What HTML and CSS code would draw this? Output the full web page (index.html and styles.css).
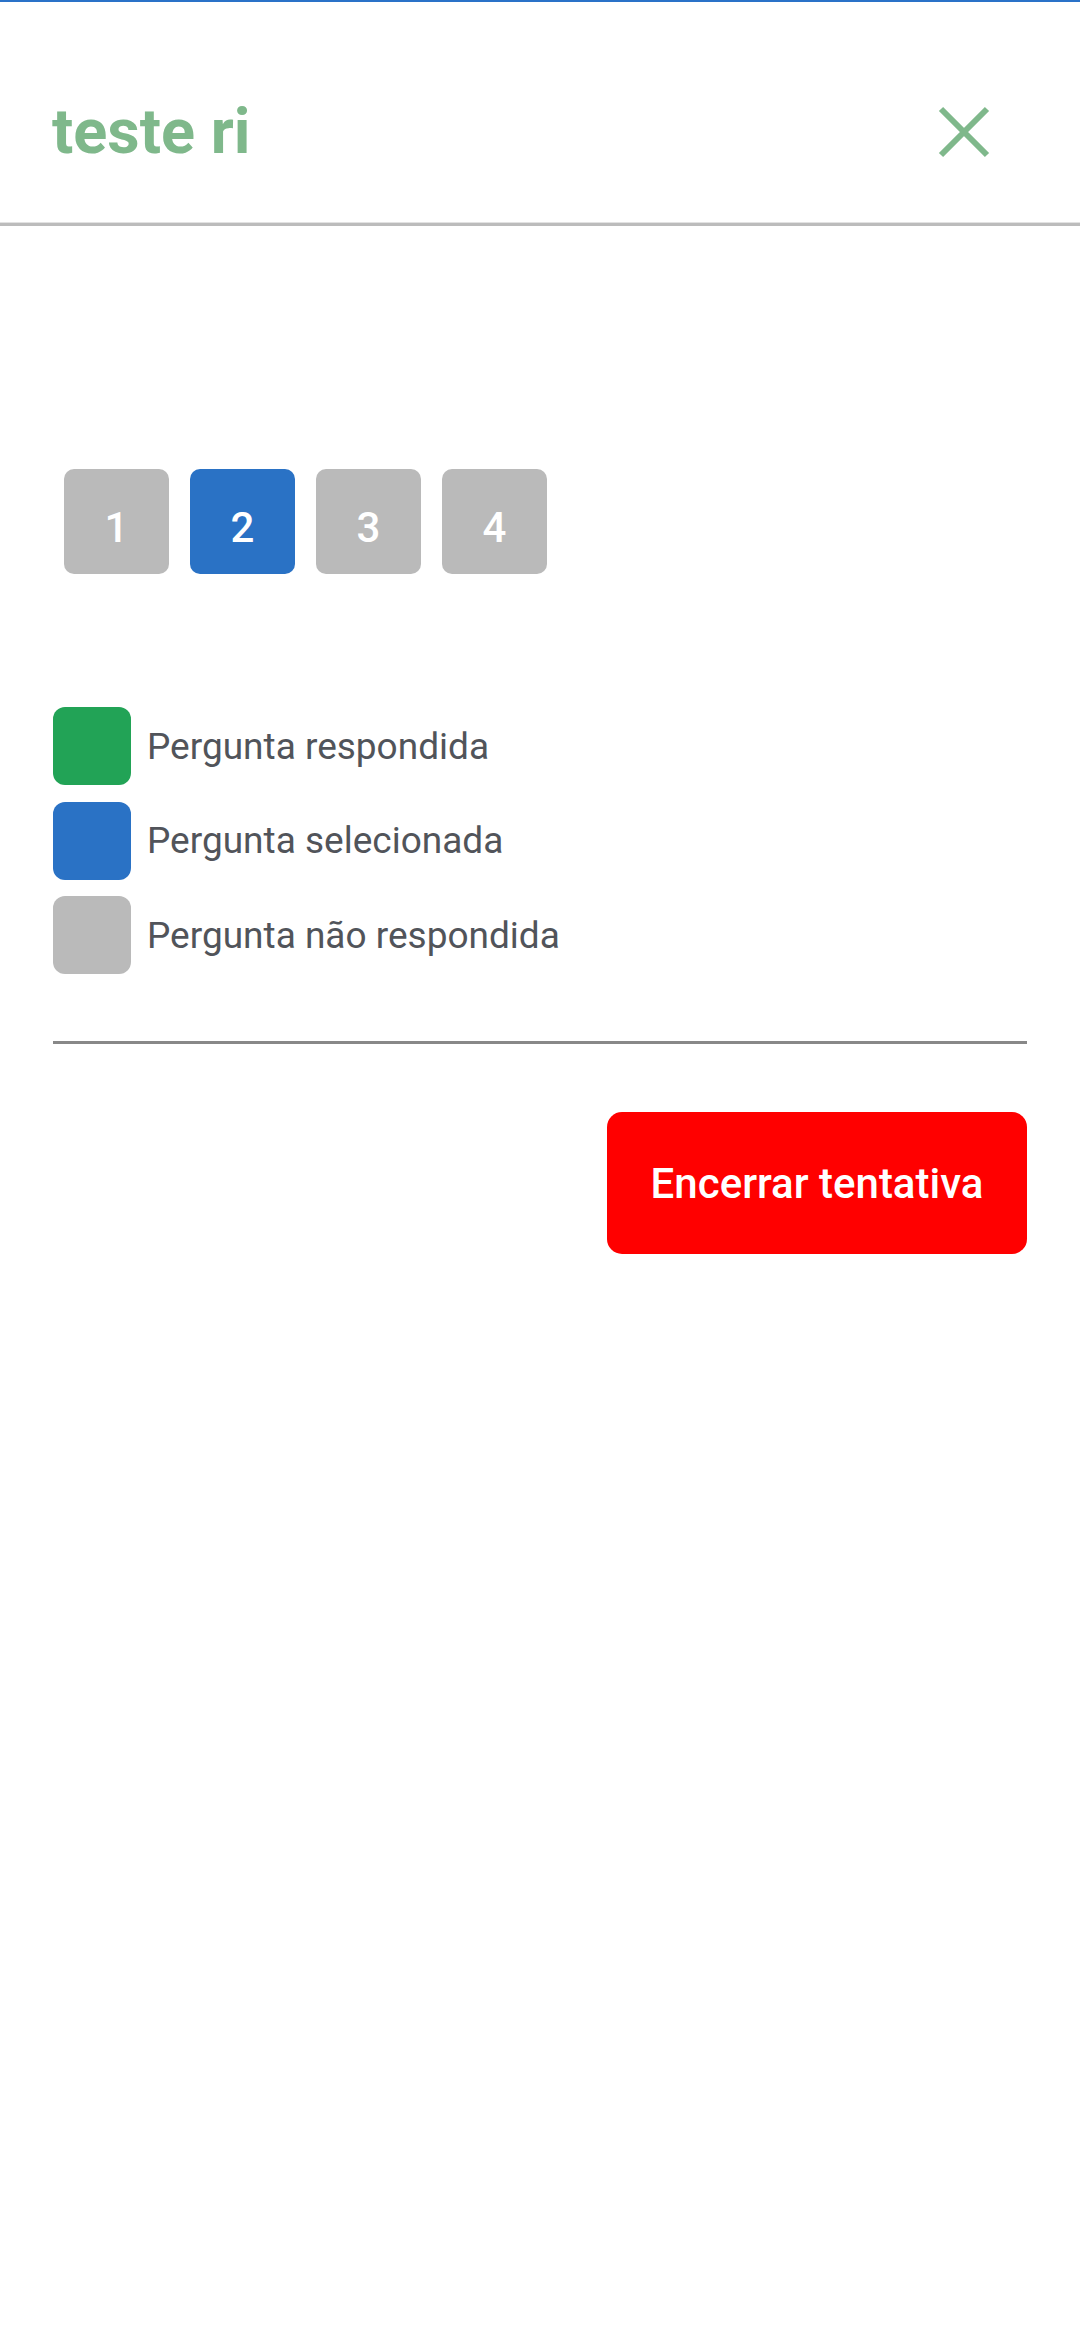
FILE: index.html
```html
<!DOCTYPE HTML>
<html>
  <head>
    <meta http-equiv="Content-type" content="text/html; charset=utf-8;">
    <meta name="viewport" content="width=device-width, initial-scale=1.0">
    <link rel="stylesheet" href="styles.css">
  </head>
<body>
  <div class="topline"></div>
  <div class="header">
    <h1 class="title">teste ri</h1>
    <button class="close" aria-label="Fechar">
      <svg viewBox="0 0 52 52" width="52" height="52">
        <path d="M3 3 L49 49 M49 3 L3 49" stroke="#7fb88b" stroke-width="6" fill="none"/>
      </svg>
    </button>
  </div>

  <div class="content">
    <div class="questions">
      <div class="q">1</div>
      <div class="q selected">2</div>
      <div class="q">3</div>
      <div class="q">4</div>
    </div>

    <ul class="legend">
      <li><span class="swatch answered"></span>Pergunta respondida</li>
      <li><span class="swatch selected"></span>Pergunta selecionada</li>
      <li><span class="swatch"></span>Pergunta não respondida</li>
    </ul>

    <hr class="divider">

    <div class="actions">
      <button class="finish">Encerrar tentativa</button>
    </div>
  </div>
</body>
</html>
```

FILE: styles.css
```css
body, html {
  margin:0;
  padding:0;
  background:white;
  font-family:Roboto, "Noto Sans", sans-serif;
}
.topline {
  height:2px;
  background:#2a72c8;
}
.header {
  display:flex;
  align-items:center;
  justify-content:space-between;
  padding:93px 90px 54px 52px;
  border-bottom:3px solid #bcbcbc;
  box-shadow:0 -1px 0 #e2e2e2 inset;
}
.title {
  margin:0;
  font-size:63px;
  line-height:74px;
  font-weight:bold;
  color:#7fb88b;
}
.close {
  border:0;
  padding:0;
  background:transparent;
  width:52px;
  height:52px;
  display:flex;
}
.content {
  padding:0 53px;
}
.questions {
  display:flex;
  gap:21px;
  margin-top:243px;
  padding-left:11px;
}
.q {
  box-sizing:border-box;
  width:105px;
  height:105px;
  padding-top:12px;
  border-radius:10px;
  background:#bababa;
  color:white;
  font-size:42px;
  font-weight:500;
  display:flex;
  align-items:center;
  justify-content:center;
}
.q.selected {
  background:#2a72c5;
}
.legend {
  list-style:none;
  margin:133px 0 0 0;
  padding:0;
  display:flex;
  flex-direction:column;
  gap:16.5px;
}
.legend li {
  display:flex;
  align-items:center;
  gap:16px;
  font-size:37px;
  color:#51545a;
}
.swatch {
  width:78px;
  height:78px;
  border-radius:12px;
  background:#bababa;
}
.swatch.answered {background:#22a356;}
.swatch.selected {background:#2a72c5;}
.divider {
  margin:67px 0 0 0;
  border:0;
  height:3px;
  background:#888;
}
.actions {
  display:flex;
  justify-content:flex-end;
  margin-top:68px;
}
.finish {
  width:420px;
  height:142px;
  border:0;
  border-radius:15px;
  background:#ff0000;
  color:white;
  font-family:Roboto, "Noto Sans", sans-serif;
  font-size:42px;
  font-weight:500;
}
```
